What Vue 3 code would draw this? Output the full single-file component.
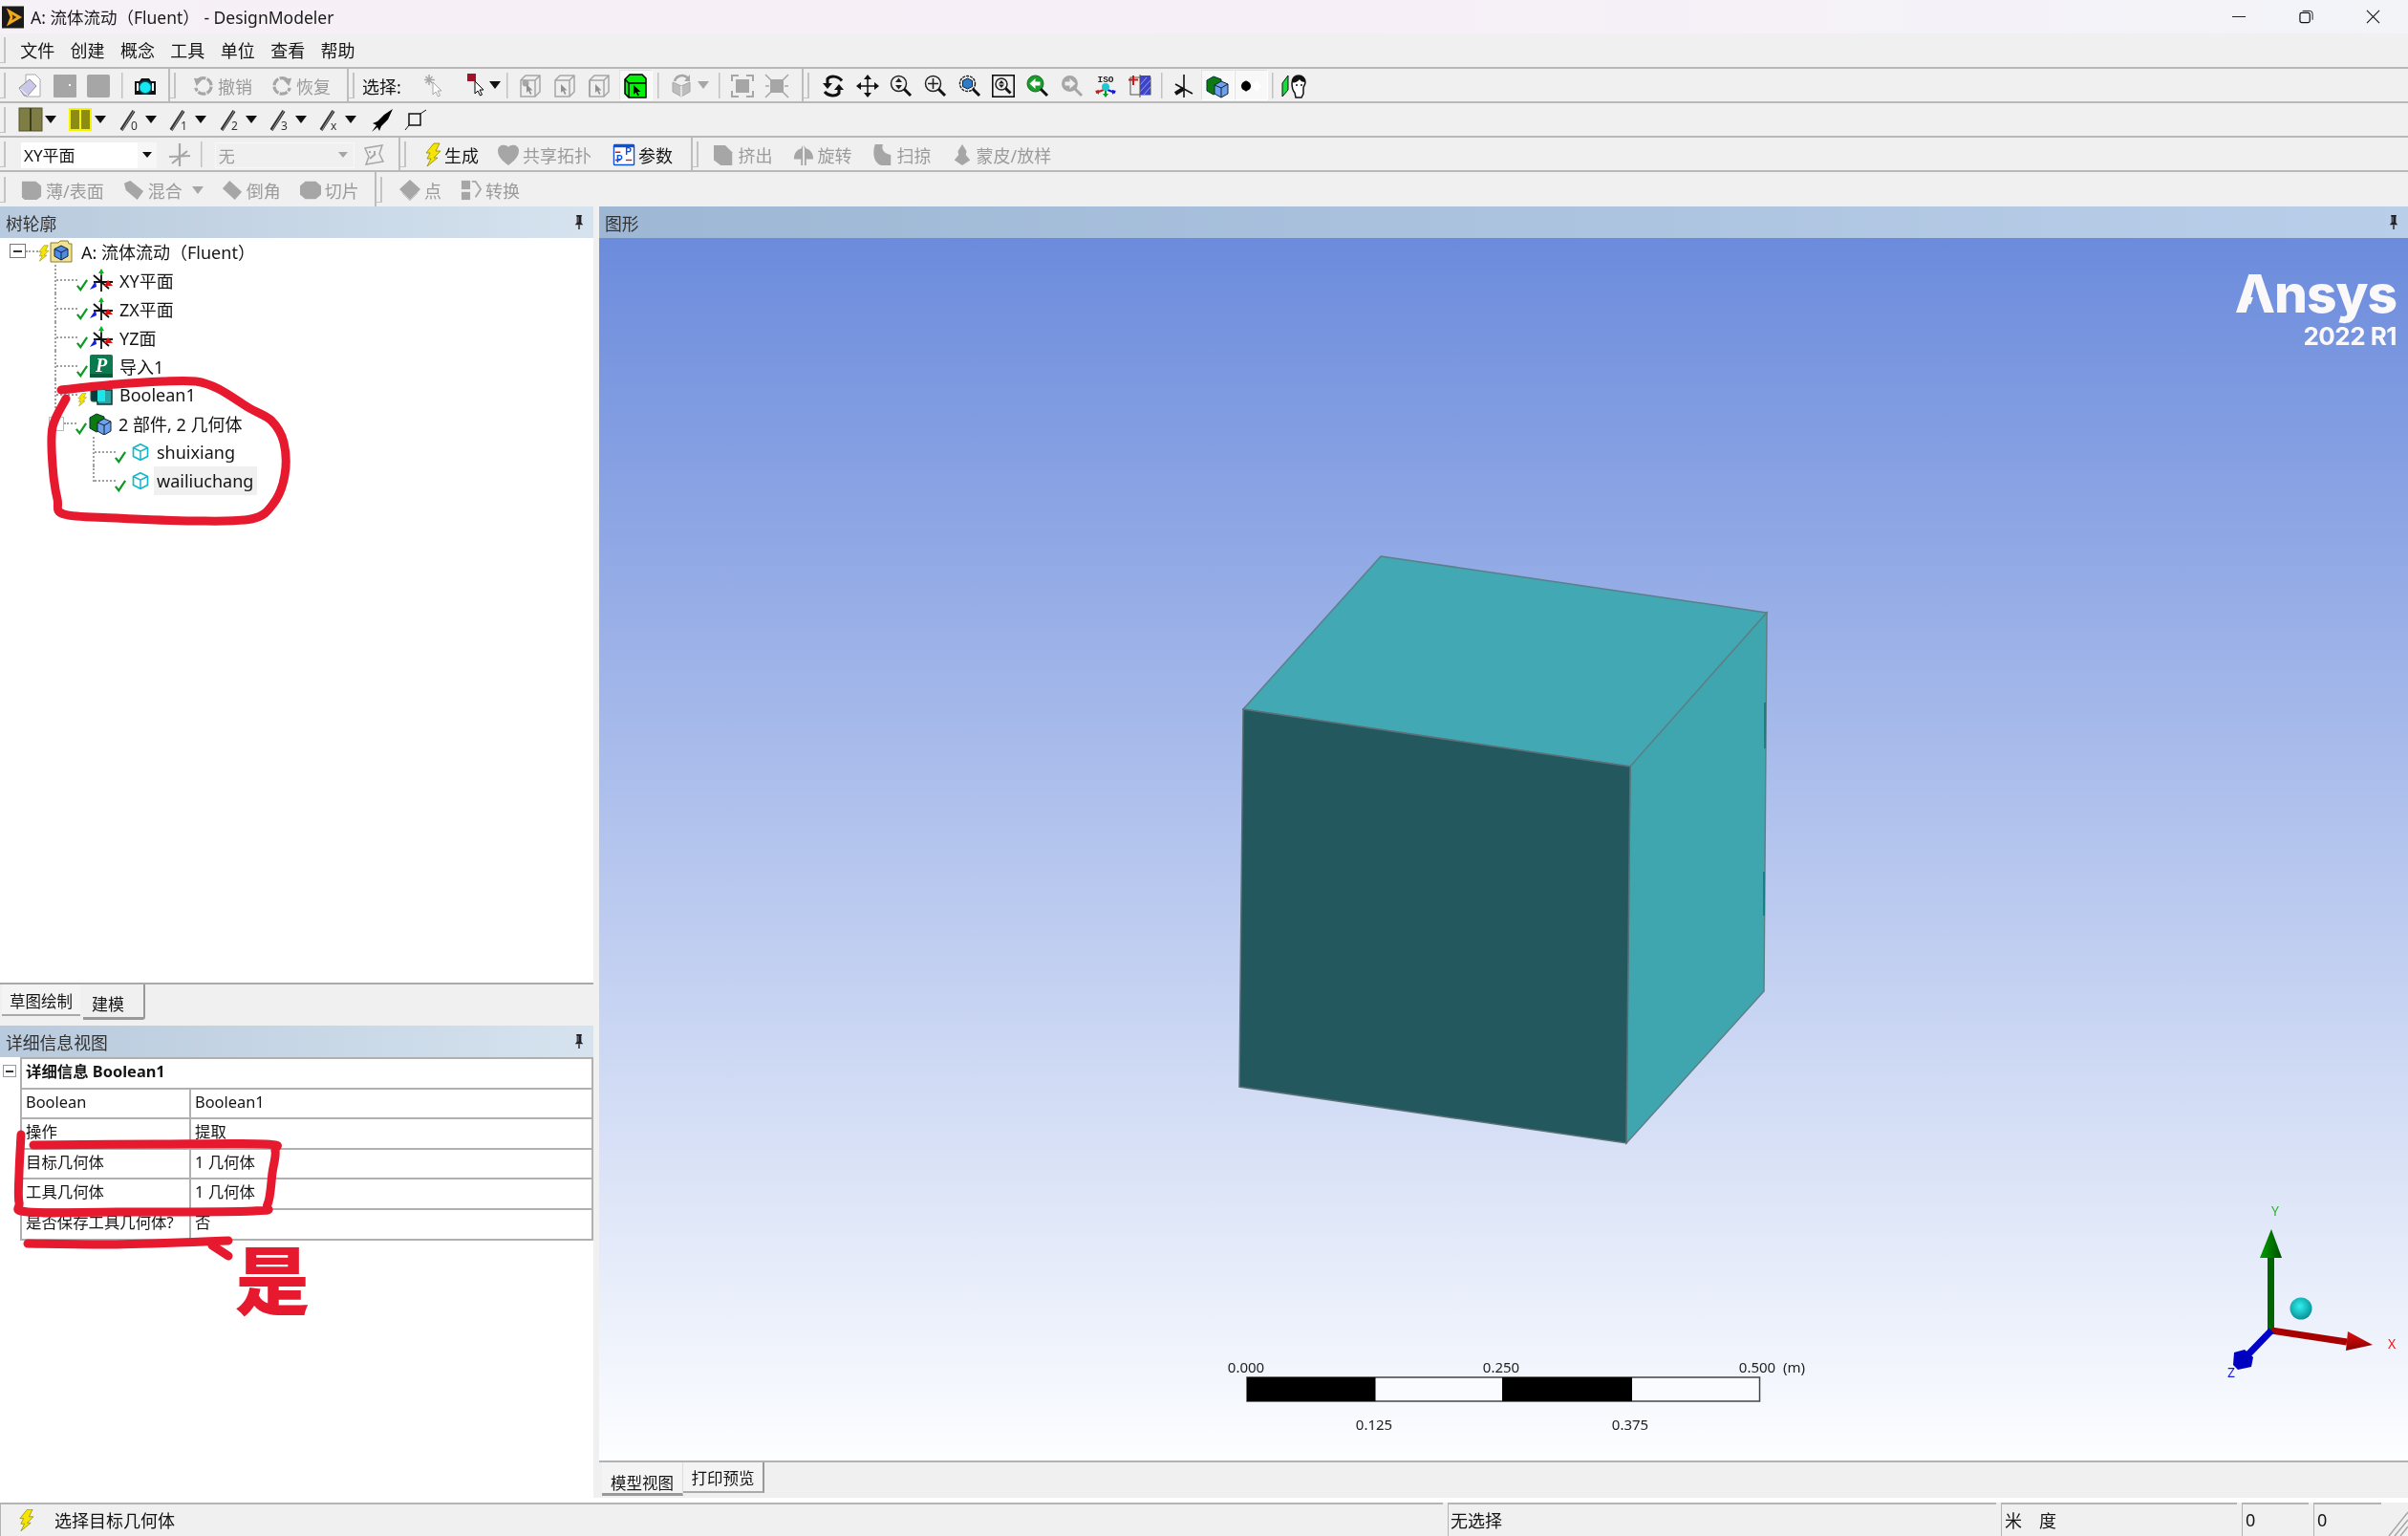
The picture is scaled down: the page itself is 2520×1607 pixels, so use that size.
<template>
  <div class="app">
    <!-- title bar -->
    <div class="titlebar">
      <svg class="logo" viewBox="0 0 24 24"><rect width="24" height="24" fill="#1a1a1a"/><path d="M5 2l17 10-17 10 4-10z" fill="#f0a81c"/><path d="M11 9l5 3-5 3 .8-3z" fill="#3a2a08"/></svg>
      <span class="title">A: 流体流动（Fluent） - DesignModeler</span>
      <div class="winctl">
        <svg viewBox="0 0 16 16" class="wbtn"><path d="M0 8h15" stroke="#111" fill="none"/></svg>
        <svg viewBox="0 0 16 16" class="wbtn"><rect x="1" y="3.500" width="11" height="11" rx="2" fill="none" stroke="#111" stroke-width="1.300"/><path d="M4 1.500h8a3 3 0 0 1 3 3v7" fill="none" stroke="#111"/></svg>
        <svg viewBox="0 0 16 16" class="wbtn"><path d="M1 1l14 14M15 1L1 15" stroke="#111" fill="none" stroke-width="1.200"/></svg>
      </div>
    </div>

    <!-- menu -->
    <div class="bar menu">
      <i class="grip"></i>
      <span v-for="m in menus" :key="m" class="menu-item">{{ m }}</span>
    </div>

    <!-- toolbar 1 -->
    <div class="bar">
      <div class="group g1">
        <i class="grip"></i>
        <span class="btn"><svg class="ic" viewBox="0 0 24 24" v-html="icons.doc"></svg></span>
        <span class="btn"><svg class="ic" viewBox="0 0 24 24" v-html="icons.blockA"></svg></span>
        <span class="btn"><svg class="ic" viewBox="0 0 24 24" v-html="icons.blockB"></svg></span>
        <i class="sep"></i>
        <span class="btn"><svg class="ic" viewBox="0 0 24 24" v-html="icons.camera"></svg></span>
      </div>
      <div class="group g1b">
        <i class="grip"></i>
        <span class="tbtn off"><svg class="ic" viewBox="0 0 24 24" v-html="icons.undo"></svg>撤销</span>
        <span class="tbtn off"><svg class="ic" viewBox="0 0 24 24" v-html="icons.redo"></svg>恢复</span>
      </div>
      <div class="group g1c">
        <i class="grip"></i>
        <span class="label">选择:</span>
        <span class="btn"><svg class="ic" viewBox="0 0 24 24" v-html="icons.spark"></svg></span>
        <span class="dbtn sel"><svg class="ic" viewBox="0 0 24 24" v-html="icons.redSel"></svg><i class="arr"></i></span>
        <i class="sep"></i>
        <span class="btn"><svg class="ic" viewBox="0 0 24 24" v-html="icons.boxA"></svg></span>
        <span class="btn"><svg class="ic" viewBox="0 0 24 24" v-html="icons.boxB"></svg></span>
        <span class="btn"><svg class="ic" viewBox="0 0 24 24" v-html="icons.boxC"></svg></span>
        <span class="btn pressed g"><svg class="ic" viewBox="0 0 24 24" v-html="icons.boxGreen"></svg></span>
        <i class="sep"></i>
        <span class="dbtn rot"><svg class="ic" viewBox="0 0 24 24" v-html="icons.cubeRot"></svg><i class="arr off"></i></span>
        <i class="sep"></i>
        <span class="btn"><svg class="ic" viewBox="0 0 24 24" v-html="icons.frameOut"></svg></span>
        <span class="btn"><svg class="ic" viewBox="0 0 24 24" v-html="icons.frameIn"></svg></span>
      </div>
      <div class="group last">
        <i class="grip tight"></i>
        <span v-for="n in viewIcons" :key="n" class="btn"><svg class="ic" viewBox="0 0 24 24" v-html="icons[n]"></svg></span>
        <i class="sep narrow"></i>
        <span class="btn"><svg class="ic" viewBox="0 0 24 24" v-html="icons.triadBlack"></svg></span>
        <span class="btn pressed"><svg class="ic" viewBox="0 0 24 24" v-html="icons.bodyCube"></svg></span>
        <span class="btn pressed"><svg class="ic" viewBox="0 0 24 24" v-html="icons.dots"></svg></span>
        <i class="sep narrow"></i>
        <span class="btn"><svg class="ic" viewBox="0 0 24 24" v-html="icons.face"></svg></span>
      </div>
    </div>

    <!-- toolbar 2 -->
    <div class="bar">
      <i class="grip"></i>
      <span class="dbtn"><svg class="ic" viewBox="0 0 24 24" v-html="icons.gridOlive"></svg><i class="arr"></i></span>
      <span class="dbtn"><svg class="ic" viewBox="0 0 24 24" v-html="icons.gridYellow"></svg><i class="arr"></i></span>
      <span v-for="d in lineDigits" :key="d" class="dbtn">
        <svg class="ic" viewBox="0 0 24 24"><path d="M2 23L15 3" stroke="#333" stroke-width="3.500" fill="none"/><path d="M3 23l12-20" stroke="#999" stroke-width="1" fill="none"/><text x="12" y="23" class="ic-digit">{{ d }}</text></svg>
        <i class="arr"></i>
      </span>
      <span class="btn bomb"><svg class="ic" viewBox="0 0 24 24" v-html="icons.bomb"></svg></span>
      <span class="btn"><svg class="ic" viewBox="0 0 24 24" v-html="icons.lineBox"></svg></span>
    </div>

    <!-- toolbar 3 -->
    <div class="bar">
      <div class="group g3">
        <i class="grip"></i>
        <div class="combo">
          <span class="combo-text">XY平面</span>
          <span class="combo-drop"><i class="arr small"></i></span>
        </div>
        <span class="btn"><svg class="ic" viewBox="0 0 24 24" v-html="icons.planeOff"></svg></span>
        <i class="sep narrow"></i>
        <div class="combo off">
          <span class="combo-text">无</span>
          <span class="combo-drop"><i class="arr small off"></i></span>
        </div>
        <span class="btn"><svg class="ic" viewBox="0 0 24 24" v-html="icons.sketchOff"></svg></span>
      </div>
      <div class="group g3b">
        <i class="grip"></i>
        <span class="tbtn gen"><svg class="ic bolt" viewBox="0 0 16 24" v-html="icons.bolt"></svg>生成</span>
        <span class="tbtn off"><svg class="ic" viewBox="0 0 24 24" v-html="icons.heart"></svg>共享拓扑</span>
        <span class="tbtn par"><svg class="ic" viewBox="0 0 24 24" v-html="icons.param"></svg>参数</span>
      </div>
      <div class="group last g3c">
        <i class="grip"></i>
        <span class="tbtn off"><svg class="ic" viewBox="0 0 24 24" v-html="icons.extrude"></svg>挤出</span>
        <span class="tbtn off"><svg class="ic" viewBox="0 0 24 24" v-html="icons.revolve"></svg>旋转</span>
        <span class="tbtn off"><svg class="ic" viewBox="0 0 24 24" v-html="icons.sweep"></svg>扫掠</span>
        <span class="tbtn off"><svg class="ic" viewBox="0 0 24 24" v-html="icons.skin"></svg>蒙皮/放样</span>
      </div>
    </div>

    <!-- toolbar 4 -->
    <div class="bar no-line">
      <div class="group g4">
        <i class="grip"></i>
        <span class="tbtn off first"><svg class="ic" viewBox="0 0 24 24" v-html="icons.thin"></svg>薄/表面</span>
        <span class="tbtn off"><svg class="ic" viewBox="0 0 24 24" v-html="icons.tag"></svg>混合<i class="arr off blend"></i></span>
        <span class="tbtn off"><svg class="ic" viewBox="0 0 24 24" v-html="icons.chamfer"></svg>倒角</span>
        <span class="tbtn off"><svg class="ic" viewBox="0 0 24 24" v-html="icons.slice"></svg>切片</span>
      </div>
      <div class="group last">
        <i class="grip"></i>
        <span class="tbtn off"><svg class="ic" viewBox="0 0 24 24" v-html="icons.point"></svg>点</span>
        <span class="tbtn off"><svg class="ic" viewBox="0 0 24 24" v-html="icons.convert"></svg>转换</span>
      </div>
    </div>

    <!-- main -->
    <div class="main">
      <div class="left">
        <div class="phead"><span>树轮廓</span><svg class="pin" viewBox="0 0 10 16" v-html="icons.pin"></svg></div>
        <div class="tree">
          <div class="row root">
            <i class="exp"></i><i class="hdots short"></i>
            <svg class="t-bolt" viewBox="0 0 16 24" v-html="icons.bolt"></svg>
            <svg class="t-ic wide" viewBox="0 0 24 24" v-html="icons.folder"></svg>
            <span class="t-text">A: 流体流动（Fluent）</span>
          </div>
          <div v-for="r in treeRows" :key="r.text" class="row" :class="[r.cls]">
            <i v-if="r.exp" class="exp faint"></i>
            <i class="hdots" :class="{ vert: r.vert, end: r.end, 'after-exp': r.exp }"></i>
            <svg v-if="r.bolt" class="t-state" viewBox="0 0 16 24" v-html="icons.bolt"></svg>
            <svg v-else class="t-state" viewBox="0 0 14 14"><path d="M1 8l4 5 8-12" fill="none" stroke="#0a9a1e" stroke-width="2.600"/></svg>
            <svg class="t-ic" viewBox="0 0 24 24" v-html="icons[r.icon]"></svg>
            <span class="t-text" :class="{ hl: r.hl }">{{ r.text }}</span>
          </div>
        </div>
        <div class="mode-tabs">
          <span class="mtab">草图绘制</span>
          <span class="mtab active">建模</span>
        </div>
        <div class="phead"><span>详细信息视图</span><svg class="pin" viewBox="0 0 10 16" v-html="icons.pin"></svg></div>
        <div class="details">
          <i class="exp small"></i>
          <table class="dtable">
            <colgroup><col class="col-k" /><col /></colgroup>
            <tbody>
              <tr><td colspan="2" class="dhead">详细信息 Boolean1</td></tr>
              <tr v-for="d in detailRows" :key="d[0]"><td>{{ d[0] }}</td><td>{{ d[1] }}</td></tr>
            </tbody>
          </table>
        </div>
      </div>

      <div class="gutter"></div>

      <div class="right">
        <div class="phead dark"><span>图形</span><svg class="pin" viewBox="0 0 10 16" v-html="icons.pin"></svg></div>
        <div class="viewport">
          <svg class="scene" viewBox="627 249 1893 1281">
            <defs>
              <linearGradient id="gy" x1="0" x2="1" y1="0" y2="0"><stop offset="0" stop-color="#00a000"/><stop offset="1" stop-color="#004d00"/></linearGradient>
              <linearGradient id="rx" x1="0" x2="0" y1="0" y2="1"><stop offset="0" stop-color="#e01010"/><stop offset="1" stop-color="#8a0000"/></linearGradient>
              <radialGradient id="ball" cx=".45" cy=".4" r=".65"><stop offset="0" stop-color="#30f0f0"/><stop offset="1" stop-color="#058a90"/></radialGradient>
            </defs>
            <!-- model -->
            <polygon points="1445,582 1849,641 1706,802 1301,742" fill="#42a8b4" stroke="#5b7f8a" stroke-width="1.500"/>
            <polygon points="1849,641 1846,1037 1702,1196 1706,802" fill="#3fa6b0" stroke="#5b8088" stroke-width="1.500"/>
            <polygon points="1301,742 1706,802 1702,1196 1297,1137" fill="#23585f" stroke="#5b7078" stroke-width="1.500"/>
            <path d="M1847 735v48M1846 912v46" stroke="#1f7c84" stroke-width="2" fill="none"/>

            <!-- scale bar -->
            <g class="scale">
              <rect x="1305" y="1441" width="536.500" height="25" fill="#fafbff" stroke="#444" stroke-width="1.500"/>
              <rect x="1305" y="1441" width="134.500" height="25" fill="#000"/>
              <rect x="1572" y="1441" width="136" height="25" fill="#000"/>
              <text x="1304" y="1436" text-anchor="middle">0.000</text>
              <text x="1571" y="1436" text-anchor="middle">0.250</text>
              <text x="1839" y="1436" text-anchor="middle">0.500</text>
              <text x="1866" y="1436">(m)</text>
              <text x="1438" y="1496" text-anchor="middle">0.125</text>
              <text x="1706" y="1496" text-anchor="middle">0.375</text>
            </g>

            <!-- triad -->
            <path d="M2376.500 1392V1312" stroke="#006400" stroke-width="7" fill="none"/>
            <polygon points="2377,1286 2388,1316 2365,1316" fill="url(#gy)"/>
            <path d="M2377 1392L2456 1404" stroke="#a80000" stroke-width="7" fill="none"/>
            <polygon points="2483,1407 2457,1393 2455,1413" fill="url(#rx)"/>
            <path d="M2377 1392L2350 1420" stroke="#0000c8" stroke-width="7" fill="none"/>
            <polygon points="2338,1415 2349,1412 2358,1420 2356,1430 2342,1433 2337,1428" fill="#0000c0"/>
            <circle cx="2408" cy="1369" r="11.500" fill="url(#ball)"/>
            <text x="2381" y="1272" class="axis" fill="#2cb52c" text-anchor="middle">Y</text>
            <text x="2503" y="1411" class="axis" fill="#f01818" text-anchor="middle">X</text>
            <text x="2335" y="1441" class="axis" fill="#1a1ae0" text-anchor="middle">Z</text>
          </svg>
          <div class="brand">
            <div class="brand-name">Ansys</div>
            <div class="brand-ver">2022 R1</div>
            <svg class="brand-cut" viewBox="0 0 22 32"><polygon points="11,0 22,32 0,32" fill="#7493df"/></svg>
          </div>
        </div>
        <div class="view-tabs">
          <span class="vtab active">模型视图</span>
          <span class="vtab">打印预览</span>
        </div>
      </div>
    </div>

    <!-- status bar -->
    <div class="status">
      <div class="cell c1"><svg class="s-bolt" viewBox="0 0 16 24" v-html="icons.bolt"></svg><span>选择目标几何体</span></div>
      <div class="cell c2">无选择</div>
      <div class="cell c3"><span>米</span><span>度</span></div>
      <div class="cell c4">0</div>
      <div class="cell c5">0</div>
      <svg class="sizer" viewBox="0 0 28 35"><path d="M8 35L28 10M14 35L28 18M20 35l8-10" stroke="#a8a8a8" stroke-width="1.500" fill="none"/></svg>
    </div>

    <!-- red pen marks on top of the screenshot -->
    <svg class="ink" viewBox="0 0 2520 1607">
      <path v-for="(s, i) in inkPaths" :key="i" :d="s"/>
    </svg>
    <span class="ink-char">是</span>
  </div>
</template>

<script setup>
const menus = ['文件', '创建', '概念', '工具', '单位', '查看', '帮助']
const viewIcons = ['rotate', 'pan', 'zoomUD', 'zoomPlus', 'zoomCube', 'zoomBox', 'zoomBack', 'zoomNext', 'iso', 'section']
const lineDigits = ['0', '1', '2', '3', 'x']

const treeRows = [
  { text: 'XY平面', icon: 'triad', cls: 'l1', vert: true },
  { text: 'ZX平面', icon: 'triad', cls: 'l1', vert: true },
  { text: 'YZ面', icon: 'triad', cls: 'l1', vert: true },
  { text: '导入1', icon: 'importP', cls: 'l1', vert: true },
  { text: 'Boolean1', icon: 'boolean', cls: 'l1', vert: true, bolt: true },
  { text: '2 部件, 2 几何体', icon: 'bodyCube', cls: 'l1 with-exp', exp: true },
  { text: 'shuixiang', icon: 'solid', cls: 'l2', vert: true },
  { text: 'wailiuchang', icon: 'solid', cls: 'l2', end: true, hl: true }
]

const detailRows = [
  ['Boolean', 'Boolean1'],
  ['操作', '提取'],
  ['目标几何体', '1 几何体'],
  ['工具几何体', '1 几何体'],
  ['是否保存工具几何体?', '否']
]

// turn hand-picked points into a soft pen stroke
function smooth(pts) {
  let d = `M${pts[0][0]} ${pts[0][1]}`
  for (let i = 0; i < pts.length - 1; i++) {
    const p0 = pts[i - 1] || pts[i]
    const p1 = pts[i]
    const p2 = pts[i + 1]
    const p3 = pts[i + 2] || p2
    const c1 = [p1[0] + (p2[0] - p0[0]) / 6, p1[1] + (p2[1] - p0[1]) / 6]
    const c2 = [p2[0] - (p3[0] - p1[0]) / 6, p2[1] - (p3[1] - p1[1]) / 6]
    d += `C${c1[0].toFixed(1)} ${c1[1].toFixed(1)} ${c2[0].toFixed(1)} ${c2[1].toFixed(1)} ${p2[0]} ${p2[1]}`
  }
  return d
}

const inkPaths = [
  [[64, 408], [122, 402], [170, 399], [205, 399], [229, 407], [261, 427], [284, 440], [297, 463], [298, 497], [286, 527], [263, 543], [204, 545], [122, 542], [67, 538], [60, 522], [55, 487], [55, 447], [69, 417]],
  [[22, 1187], [20, 1227], [20, 1258], [29, 1268], [122, 1268], [265, 1267], [280, 1260], [285, 1227], [288, 1204], [278, 1197], [163, 1197], [35, 1198]],
  [[29, 1301], [122, 1302], [239, 1298]],
  [[222, 1303], [239, 1314]]
].map(smooth)

const gray = '#a6a6a6'
const cursor = (c, s) => `<path d="M9 8v13l3-3 2.500 5 2-1-2.500-5h4z" fill="${c}" stroke="${s}" stroke-width="1"/>`
const lens = (inner, box) => `<circle cx="${box ? 10 : 9.5}" cy="${box ? 10 : 9.5}" r="${box ? 6 : 8}" fill="none" stroke="#222" stroke-width="1.500"/>${inner}<path d="M${box ? '14.500 14.500' : '15 15'}l${box ? 5 : 7} ${box ? 5 : 7}" stroke="#111" stroke-width="3"/>`
const box3d = (mark) => `<path d="M2 6l5-5h15v17l-5 5H2zM2 6h15v17M17 6l5-5" fill="#efefef" stroke="${gray}" stroke-width="1.500"/>${mark}<path d="M8 10v9l2-2 2 4 1.500-1-2-3.500h3z" fill="#8f8f8f"/>`

const icons = {
  doc: `<path d="M7 0h10l5 5v18H7z" fill="#fff" stroke="#a8a8a8"/><path d="M0 14L11 5l7 7-9 10H5z" fill="#c9c7ea" stroke="#8f8f8f"/><path d="M1 15l8 7" stroke="#fff"/>`,
  blockA: `<rect x="0" y="0" width="24" height="24" rx="1" fill="${gray}"/><rect x="16" y="10" width="2" height="2" fill="#fff"/>`,
  blockB: `<rect x="0" y="0" width="24" height="24" rx="2" fill="${gray}"/>`,
  camera: `<path d="M1 7h5l2-3h8l2 3h5v14H1z" fill="#111"/><circle cx="12" cy="13.500" r="6.500" fill="#14e8f2" stroke="#0a4b5c" stroke-width="1.500"/><rect x="3" y="9" width="2" height="8" fill="#fff"/><rect x="19" y="9" width="2" height="8" fill="#fff"/>`,
  undo: `<path d="M6 5a9 9 0 1 1-3 9" fill="none" stroke="${gray}" stroke-width="3.500" stroke-dasharray="9 1.500"/><path d="M1 3l10 1-7 8z" fill="${gray}"/><circle cx="12" cy="12" r="2" fill="#efefef"/>`,
  redo: `<path d="M18 5a9 9 0 1 0 3 9" fill="none" stroke="${gray}" stroke-width="3.500" stroke-dasharray="9 1.500"/><path d="M23 3l-10 1 7 8z" fill="${gray}"/>`,
  spark: `<path d="M5 0v11M0 5.500h11M1.500 2l7 7M8.500 2l-7 7" stroke="${gray}" stroke-width="1.500"/><path d="M9 8v13l3-3 2.500 5 2-1-2.500-5h4z" fill="#fff" stroke="${gray}"/>`,
  redSel: `<rect x="1" y="0" width="9" height="8" fill="#a31226"/>${cursor('#fff', '#000')}`,
  boxA: box3d(`<circle cx="7" cy="9" r="3.500" fill="${gray}"/>`),
  boxB: box3d(''),
  boxC: box3d(`<path d="M2 6v17" stroke="${gray}" stroke-width="2"/>`),
  boxGreen: `<path d="M1 5l5-5h13l4 4v20H5l-4-4z" fill="#07f007" stroke="#000" stroke-width="1.500"/><path d="M1 5l4 4v15M5 9h18" fill="none" stroke="#000" stroke-width="1.500"/><path d="M10 11v10l2.500-2.500 2 4 1.500-1-2-3.500h3.500z" fill="#000"/>`,
  cubeRot: `<path d="M3 9l9 4 9-4v10l-9 5-9-5z" fill="#bdbdbd" stroke="${gray}"/><path d="M12 13v11" stroke="#efefef" stroke-width="1.500"/><path d="M5 8a8 8 0 0 1 14-3" fill="none" stroke="${gray}" stroke-width="2.500"/><path d="M21 1v7h-6z" fill="${gray}"/>`,
  frameOut: `<rect x="5" y="5" width="14" height="14" fill="${gray}"/><path d="M1 7V1h7M16 1h7v6M23 17v6h-7M8 23H1v-6" fill="none" stroke="${gray}" stroke-width="2"/>`,
  frameIn: `<rect x="5" y="5" width="14" height="14" rx="1" fill="${gray}"/><path d="M0 0l6 6M24 0l-6 6M24 24l-6-6M0 24l6-6M4 12H0M24 12h-4" stroke="${gray}" stroke-width="1.500"/>`,
  rotate: `<path d="M21 6.500C17 1 9 1 6 4.500V10" fill="none" stroke="#111" stroke-width="3"/><path d="M1 9h10l-5 6z" fill="#111"/><path d="M3 18c4 5 12 5 15 1.500V15" fill="none" stroke="#111" stroke-width="3"/><path d="M23 16H13l5-6z" fill="#111"/>`,
  pan: `<path d="M12 3v18M3 12h18" stroke="#111" stroke-width="1.500"/><path d="M12 0l4 5H8zM12 24l-4-5h8zM0 12l5-4v8zM24 12l-5 4V8z" fill="#111"/>`,
  zoomUD: lens(`<path d="M9.500 3.500l3.500 4.500H6zM9.500 15.500L6 11h7z" fill="#222"/>`),
  zoomPlus: lens(`<path d="M9.500 4v11M4 9.500h11" stroke="#222" stroke-width="1.600"/>`),
  zoomCube: `<circle cx="9.500" cy="9.500" r="8" fill="none" stroke="#222" stroke-width="1.500" stroke-dasharray="3 1"/><path d="M9.500 4l5 2.500v6l-5 2.500-5-2.500v-6z" fill="#2d7cc8" stroke="#123"/><path d="M15 15l7 7" stroke="#111" stroke-width="3"/>`,
  zoomBox: `<rect x="0.800" y="0.800" width="22.400" height="22.400" fill="none" stroke="#111" stroke-width="1.600"/>${lens('<path d="M10 6l3 3.500H7zM10 14l-3-3.500h6z" fill="#222"/>', true)}`,
  zoomBack: `<circle cx="9.500" cy="9.500" r="8.500" fill="#1c9a2c" stroke="#0e6e1c"/><path d="M3.500 9.500L9.500 4v3.500h5v4h-5V15z" fill="#fff"/><path d="M15 15l7 7" stroke="#111" stroke-width="3"/>`,
  zoomNext: `<circle cx="9.500" cy="9.500" r="8.500" fill="${gray}"/><path d="M15.500 9.500L9.500 4v3.500h-5v4h5V15z" fill="#efefef"/><path d="M15 15l7 7" stroke="${gray}" stroke-width="3"/>`,
  iso: `<text x="12" y="8" class="ic-iso">ISO</text><path d="M12 14v8" stroke="#0a9a1e" stroke-width="2"/><path d="M9 20l3 4 3-4z" fill="#0a9a1e"/><path d="M10 16l-8 3" stroke="#d01818" stroke-width="2"/><path d="M1 17l4-1v5z" fill="#d01818"/><path d="M14 16l8 3" stroke="#1818d0" stroke-width="2"/><path d="M23 17l-4-1v5z" fill="#1818d0"/><circle cx="12" cy="13" r="4" fill="#1fc8d0"/>`,
  section: `<rect x="2" y="3" width="21" height="18" fill="none" stroke="#555"/><rect x="12" y="1" width="11" height="20" fill="#3d44c8"/><path d="M12 11l7-8M12 18L23 6M16 21l7-8" stroke="#9aa2f0"/><path d="M12 0v24" stroke="#555"/><path d="M5 1v10M0 5.500h10" stroke="#d01818" stroke-width="2"/>`,
  triadBlack: `<path d="M12 0v24M3 10l18 10" stroke="#111" stroke-width="1.600"/><path d="M3 20l8-5" stroke="#111" stroke-width="4"/>`,
  bodyCube: `<path d="M1 6l7-4 8 3v12l-8 4-7-4z" fill="#0c7a10" stroke="#033"/><path d="M9 11l7-4 7 3v10l-7 4-7-4z" fill="#6fa0ee" stroke="#123"/><path d="M9 11l7 3 7-4M16 14v10" fill="none" stroke="#123"/>`,
  dots: `<path d="M7 6l5 6-5 6-5-6z" fill="#000"/><circle cx="7" cy="12" r="5" fill="#000"/><path d="M18 6l5 6-5 6-5-6z" fill="#fff"/>`,
  face: `<path d="M0 9l6-8v15l-6 7z" fill="#19dc3c" stroke="#111"/><path d="M10 9c0-5 3-8 7-8s7 3 7 7c0 3-2 4-2 6v6l-2 4h-6l-1-5c-2-2-3-5-3-10z" fill="#fff" stroke="#111" stroke-width="1.500"/><path d="M10 8c2 1 6 0 8-3 1 2 3 3 6 3 0-5-3-7-7-7s-7 3-7 7z" fill="#111"/><circle cx="15" cy="11" r="1" fill="#111"/><circle cx="20" cy="11" r="1" fill="#111"/>`,
  gridOlive: `<rect x="0" y="0" width="24" height="24" fill="#7d7d45" stroke="#55552a"/><path d="M12 0v24" stroke="#3d3d1c" stroke-width="2"/>`,
  gridYellow: `<rect x="1" y="1" width="22" height="22" fill="#8c8c14" stroke="#f4f400" stroke-width="2"/><path d="M12 1v22" stroke="#f4f400" stroke-width="2"/>`,
  bomb: `<path d="M23 0l-5 11-7 7-2 5-2-4-6 5 5-7-4-2 5-2 7-7z" fill="#000"/>`,
  lineBox: `<rect x="5" y="5" width="12" height="12" fill="none" stroke="#111" stroke-width="1.500"/><path d="M17 5l6-4M5 17l-4 5" stroke="#111"/>`,
  planeOff: `<path d="M12 0v24M1 14l22-1M4 21L20 8" stroke="${gray}" stroke-width="2.200"/>`,
  sketchOff: `<path d="M3 5l18-3-3 9 4 8-18 3 3-8z" fill="none" stroke="${gray}" stroke-width="1.500"/><path d="M7 9h2M13 8v3M8 16l6-5" stroke="${gray}" stroke-width="2"/>`,
  bolt: `<path d="M9 0h6l-4 8h5L9 15h4L2 24l4-8H2l3-6H1z" fill="#f6e500" stroke="#8f8500" stroke-width="0.800"/>`,
  heart: `<path d="M12 24C4 18 0 13 0 7c0-5 5-7 8-6 2 0 3 1 4 2 1-1 2-2 4-2 3-1 8 1 8 6 0 6-4 11-12 17z" fill="${gray}"/>`,
  param: `<rect x="0.500" y="0.500" width="23" height="23" rx="1" fill="#fff" stroke="#1050d8" stroke-width="1.500"/><rect x="0.500" y="0.500" width="23" height="3" fill="#1050d8"/><path d="M2 9h6M2 18h6" stroke="#d01818" stroke-width="1.500"/><text x="17" y="12" class="ic-p">P</text><text x="7" y="21" class="ic-p">P</text><path d="M14 18h7" stroke="#d01818" stroke-width="1.500"/>`,
  extrude: `<path d="M0 1h13l8 8v15H8l-8-6z" fill="${gray}"/>`,
  revolve: `<path d="M12 1l3 4c5 1 8 6 8 12h-8v7h-2V5zM11 1v23H9v-7H1c0-6 3-11 8-12z" fill="${gray}"/>`,
  sweep: `<path d="M3 0h9c-2 5 0 10 9 12v12H10C3 22-1 12 3 0z" fill="${gray}"/>`,
  skin: `<path d="M12 0l5 8-1 4 5 6-9 6-9-6 5-6-1-4z" fill="${gray}"/>`,
  thin: `<path d="M1 2h16l6 5v12l-5 4H4l-3-3z" fill="${gray}"/>`,
  tag: `<path d="M1 4l7-3 15 12-7 10L3 12z" fill="${gray}"/>`,
  chamfer: `<path d="M9 1l14 13-8 9L1 10z" fill="${gray}"/>`,
  slice: `<path d="M6 2h12l6 5v10l-6 5H6l-6-5V7z" fill="${gray}"/>`,
  point: `<path d="M12 0l12 11-12 12L0 11z" fill="${gray}"/><path d="M3 15l9 9 9-9" fill="none" stroke="#bbb"/>`,
  convert: `<rect x="1" y="1" width="10" height="10" fill="${gray}"/><rect x="1" y="14" width="10" height="9" fill="${gray}"/><path d="M13 2h4l6 9-6 9" fill="none" stroke="${gray}" stroke-width="2"/>`,
  pin: `<path d="M2 0h6v1.500H7.500v7L9.500 11H.5l2-2.500v-7H2z" fill="#222"/><path d="M5 11v5" stroke="#222" stroke-width="1.500"/><path d="M4 2v6" stroke="#8a8ad0"/>`,
  folder: `<path d="M1 3h8l2-2h8l1 3h3v19H1z" fill="#efe39a" stroke="#8f7f20"/><path d="M12 6l7 3.500v7.500l-7 4-7-4V9.500z" fill="#4f8ae8" stroke="#123"/><path d="M5 9.500l7 3.500 7-3.500M12 13v8" fill="none" stroke="#123"/>`,
  triad: `<path d="M12 3v21M4 14h20" stroke="#111" stroke-width="1.800"/><path d="M4 7l16 14" stroke="#111" stroke-width="1.800"/><path d="M12 0l3 5H9z" fill="#0bb81c"/><path d="M12 3v4" stroke="#0bb81c" stroke-width="2"/><path d="M0 22l6-9 1 6z" fill="#1a1ae0"/><path d="M24 18h-9l4-6z" fill="#e01010"/>`,
  importP: `<rect x="0" y="0" width="24" height="24" rx="2" fill="#0b7a4e"/><path d="M0 20h24v4H0z" fill="#0a5a3a"/><text x="12" y="18" class="ic-pp">P</text>`,
  boolean: `<rect x="1" y="4" width="15" height="15" rx="2" fill="#0a3a3a" stroke="#063"/><rect x="8" y="7" width="15" height="15" fill="#26a8a8" stroke="#0a3a3a" stroke-width="1.500"/><rect x="8" y="7" width="8" height="12" fill="#1ce6e6"/>`,
  solid: `<path d="M12 1l10 5v12l-10 5-10-5V6z" fill="#fff" stroke="#12b8c8" stroke-width="2.200"/><path d="M2 6l10 5 10-5M12 11v12" fill="none" stroke="#12b8c8" stroke-width="2"/>`
}
</script>

<style scoped>
.app {
  position: relative;
  width: 2520px;
  height: 1607px;
  display: flex;
  flex-direction: column;
  overflow: hidden;
  background: #fff;
  color: #151515;
  font-family: "Noto Sans", "Noto Sans CJK SC", sans-serif;
  font-size: 18px;
  filter: blur(0.4px);
}

/* title bar */
.titlebar {
  height: 35px;
  flex: none;
  display: flex;
  align-items: center;
  padding-left: 2px;
  background: linear-gradient(90deg, #f6f1f6, #f7eff7 55%, #f2f4f8);
}
.logo { width: 23px; height: 24px; margin-right: 7px; }
.title { font-size: 17.500px; color: #1a1a1a; white-space: nowrap; }
.winctl { margin-left: auto; display: flex; gap: 55px; padding-right: 29px; }
.wbtn { width: 15px; height: 15px; }

/* bars */
.bar {
  height: 36px;
  flex: none;
  display: flex;
  align-items: center;
  background: #f0f0f0;
  border-bottom: 2px solid #b8b8b8;
  box-shadow: inset 0 -1px 0 #f0f0f0, 0 1px 0 #fff;
  box-sizing: border-box;
  position: relative;
}
.bar.menu { height: 37px; }
.bar.no-line { border-bottom: none; box-shadow: none; }
.group {
  height: 100%;
  display: flex;
  align-items: center;
  box-sizing: border-box;
  border-right: 2px solid #bdbdbd;
  flex: none;
}
.group.last { border-right: none; flex: 1; }
.g1 { width: 178px; }
.g1b { width: 187px; }
.g1c { width: 476px; }
.g3 { width: 419px; }
.g3b { width: 306px; }
.g4 { width: 394px; }

.grip {
  flex: none;
  width: 6px;
  height: 27px;
  margin-right: 8px;
  border-right: 2px solid #c4c4c4;
  border-bottom: 1px solid #c4c4c4;
  box-sizing: border-box;
}
.grip.tight { margin-right: 7px; }
.menu-item { width: 52.400px; flex: none; text-align: center; font-size: 18px; padding-bottom: 1px; }
.menu .grip { margin-right: 7px; }
.btn {
  width: 35.700px;
  height: 30px;
  flex: none;
  display: flex;
  align-items: center;
  justify-content: center;
  box-sizing: border-box;
  padding-top: 1px;
}
.ic { width: 24px; height: 24px; flex: none; overflow: visible; }
.btn.pressed {
  width: 35px;
  height: 32px;
  background: #f8f8f8;
  border: 1px solid #e2e2e2;
  border-right-color: #fff;
  border-bottom-color: #fff;
}
.btn.g { margin-left: 3px; margin-right: 0; }
.btn.bomb { margin-left: 1px; }
.dbtn {
  width: 52.400px;
  flex: none;
  padding-left: 6px;
  box-sizing: border-box;
  display: flex;
  align-items: center;
  gap: 3px;
}
.dbtn.sel { margin-left: 14px; width: 37px; padding-left: 0; gap: 0; }
.dbtn.rot { width: 51px; padding-left: 5px; gap: 5px; }
.sep {
  flex: none;
  width: 13px;
  height: 27px;
  background: linear-gradient(#c2c2c2, #c2c2c2) center / 1.500px 100% no-repeat;
}
.sep.narrow { width: 10px; }
.label { font-size: 18px; margin-right: 18px; padding-top: 1px; }
.arr {
  flex: none;
  width: 0;
  height: 0;
  border-left: 6.500px solid transparent;
  border-right: 6.500px solid transparent;
  border-top: 8px solid #111;
}
.arr.off { border-top-color: #a6a6a6; }
.arr.small { border-left-width: 5.500px; border-right-width: 5.500px; border-top-width: 6px; }
.arr.blend { margin-left: 6px; margin-right: -1px; }
.tbtn {
  flex: none;
  padding: 1px 10px 0;
  display: flex;
  align-items: center;
  gap: 4px;
  white-space: nowrap;
}
.tbtn .ic { width: 22px; height: 24px; }
.tbtn.off { color: #9b9b9b; }
.tbtn.gen { margin-left: 2px; }
.tbtn.par { margin-left: 3px; }
.tbtn .ic.bolt { width: 16px; }
.tbtn.first { margin-left: -2px; }
.g3c .tbtn { padding: 1px 10.500px 0; }
.g3c .tbtn:first-of-type { margin-left: -3px; }

.combo {
  flex: none;
  width: 142px;
  height: 27px;
  margin-left: 8px;
  margin-right: 6px;
  margin-top: 2px;
  display: flex;
  background: #f7f7f7;
}
.combo-text { width: 122px; background: #fff; padding-left: 3px; font-size: 17px; line-height: 27px; box-sizing: border-box; }
.combo-drop { flex: 1; display: flex; align-items: center; justify-content: center; }
.combo.off { width: 146px; margin-left: 9px; margin-right: 2px; background: #f0f0f0; border: 1px solid #f8f8f8; box-sizing: border-box; color: #9b9b9b; }
.combo.off .combo-text { background: none; width: 122px; padding-left: 3px; }

/* main */
.main { flex: 1; display: flex; min-height: 0; background: #fff; }
.left { width: 621px; flex: none; display: flex; flex-direction: column; }
.gutter { width: 6px; flex: none; background: #f0f0f0; margin-bottom: 5px; }
.right { flex: 1; display: flex; flex-direction: column; min-width: 0; padding-bottom: 5px; }
.phead {
  height: 33px;
  flex: none;
  display: flex;
  align-items: center;
  padding: 0 10px 0 6px;
  font-size: 17.800px;
  color: #333;
  background: linear-gradient(90deg, #b8cadd, #d6e3ef);
}
.phead.dark { background: linear-gradient(90deg, #9db7d4, #b9cee9); padding-left: 6px; }
.pin { width: 10px; height: 15px; margin-left: auto; }

/* tree */
.tree { height: 781px; flex: none; box-sizing: border-box; border-bottom: 2px solid #a9a9a9; font-size: 18px; }
.row { height: 30.100px; display: flex; align-items: center; position: relative; white-space: nowrap; }
.row.root { padding-left: 10px; margin-top: -1.500px; }
.row.l1 { padding-left: 59px; }
.row.l1.with-exp { padding-left: 51px; }
.row.l2 { padding-left: 99px; }
.exp {
  flex: none;
  width: 17px;
  height: 15px;
  border: 1.500px solid #777;
  box-sizing: border-box;
  background: linear-gradient(#333, #333) center / 9px 2px no-repeat #fff;
}
.exp.faint { width: 16px; border-color: #bbb; background: #fff; }
.exp.small { position: absolute; left: 3px; top: 8px; width: 14px; height: 13px; border-color: #999; background-size: 8px 2px; }
.hdots { flex: none; height: 0; width: 22px; border-top: 2px dotted #a0a0a0; position: relative; }
.hdots.short { width: 13px; }
.l1.with-exp .hdots { width: 13px; }
.hdots.vert::before { content: ""; position: absolute; left: -2px; top: -17px; height: 30px; border-left: 2px dotted #a0a0a0; }
.hdots.end::before { content: ""; position: absolute; left: -2px; top: -17px; height: 17px; border-left: 2px dotted #a0a0a0; }
.t-bolt { width: 11px; height: 18px; margin-left: 0; margin-top: 4px; }
.t-ic { width: 24px; height: 24px; flex: none; }
.t-ic.wide { margin-left: 1px; }
.t-state { width: 12px; height: 14px; margin-top: 10px; margin-left: -1px; margin-right: 2px; flex: none; }
.t-text { margin-left: 7px; padding: 0 2px 0 0; }
.root .t-text { margin-left: 9px; }
.l2 .t-ic { width: 18px; height: 20px; margin-left: 4px; }
.l2 .t-text { margin-left: 8px; }
.l2 .hdots { width: 22px; }
.t-text.hl { background: #f0f0f0; padding: 0 4px 0 3px; margin-left: 5px; line-height: 30px; }

/* modelling tabs */
.mode-tabs { height: 43px; flex: none; background: #f0f0f0; display: flex; align-items: flex-start; padding-left: 2px; gap: 3px; }
.mtab {
  width: 82px;
  height: 33px;
  line-height: 35px;
  text-align: center;
  font-size: 16.500px;
  background: #f4f4f4;
  border-bottom: 2px solid #a9a9a9;
  box-sizing: border-box;
}
.mtab.active {
  width: 65px;
  height: 37px;
  line-height: 41px;
  font-size: 17px;
  text-align: left;
  padding-left: 9px;
  background: #f0f0f0;
  border-right: 2px solid #999;
  border-bottom: 3px solid #999;
  border-radius: 0 0 3px 0;
}

/* details */
.details { position: relative; flex: 1; padding-left: 21px; background: #fff; font-size: 16.400px; }
.dtable { width: 600px; border-collapse: collapse; table-layout: fixed; }
.col-k { width: 177px; }
.dtable td { height: 31.600px; padding: 0 0 3px 4px; border: 2px solid #b0b0b0; box-sizing: border-box; line-height: 1; white-space: nowrap; overflow: hidden; }
.dtable td.dhead { font-weight: 700; }

/* graphics */
.viewport {
  position: relative;
  height: 1281px;
  flex: none;
  background: linear-gradient(#6b8bdc, #fdfeff);
  border-bottom: 2px solid #b2b2b2;
  box-sizing: border-box;
}
.scene { position: absolute; left: 0; top: 0; width: 1893px; height: 1281px; }
.scale text { font-size: 15px; fill: #222; font-family: "Noto Sans", sans-serif; }
.axis { font-size: 14px; font-family: "Noto Sans", sans-serif; }
.brand { position: absolute; right: 12px; top: 28px; color: #faf8f8; text-align: right; font-family: Inter, "Noto Sans", sans-serif; font-weight: 800; }
.brand-name { font-size: 55px; line-height: 60px; letter-spacing: -1px; }
.brand-ver { font-size: 26px; line-height: 30px; font-weight: 700; letter-spacing: -0.500px; }
.brand-cut { position: absolute; left: 11px; top: 25px; width: 22px; height: 32px; }
.view-tabs { height: 37px; flex: none; background: #f0f0f0; display: flex; align-items: flex-start; padding-left: 3px; }
.vtab { width: 85px; height: 32px; line-height: 34px; text-align: center; font-size: 16.500px; background: #f4f4f4; border-right: 2px solid #999; border-bottom: 2px solid #aaa; box-sizing: border-box; }
.vtab.active { height: 35px; line-height: 43px; border-right: 1px solid #ddd; border-bottom: 3px solid #999; }

/* status */
.status { height: 35px; flex: none; display: flex; background: #f0f0f0; position: relative; gap: 5px; font-size: 18px; }
.cell { border-top: 2px solid #b4b4b4; border-left: 1px solid #b4b4b4; box-sizing: border-box; display: flex; align-items: center; white-space: nowrap; padding-bottom: 1px; }
.c1 { width: 1510px; padding-left: 19px; }
.s-bolt { width: 15px; height: 23px; margin-right: 22px; }
.c2 { width: 574px; padding-left: 2px; }
.c3 { width: 247px; padding-left: 3px; gap: 18px; }
.c4 { width: 70px; padding-left: 3px; }
.c5 { width: 71px; padding-left: 3px; }
.sizer { position: absolute; right: 0; top: 0; width: 28px; height: 35px; }

/* annotation */
.ink { position: absolute; left: 0; top: 0; width: 2520px; height: 1607px; pointer-events: none; }
.ink path { fill: none; stroke: #e6192e; stroke-width: 9; stroke-linecap: round; stroke-linejoin: round; }
.ink-char {
  position: absolute;
  left: 246px;
  top: 1291px;
  font-size: 78px;
  line-height: 90px;
  font-weight: 900;
  color: #e6192e;
  font-family: "Noto Sans CJK SC", sans-serif;
}
</style>

<style>
.ic-digit { font-size: 12px; fill: #333; font-family: "Noto Sans", sans-serif; }
.ic-iso { font-size: 9.500px; font-weight: 700; text-anchor: middle; fill: #222; font-family: "Liberation Mono", monospace; }
.ic-p { font-size: 11px; font-weight: 700; text-anchor: middle; fill: #1050d8; font-family: "Liberation Sans", sans-serif; }
.ic-pp { font-size: 20px; font-weight: 700; text-anchor: middle; fill: #fff; font-family: "Liberation Serif", serif; font-style: italic; }
</style>
